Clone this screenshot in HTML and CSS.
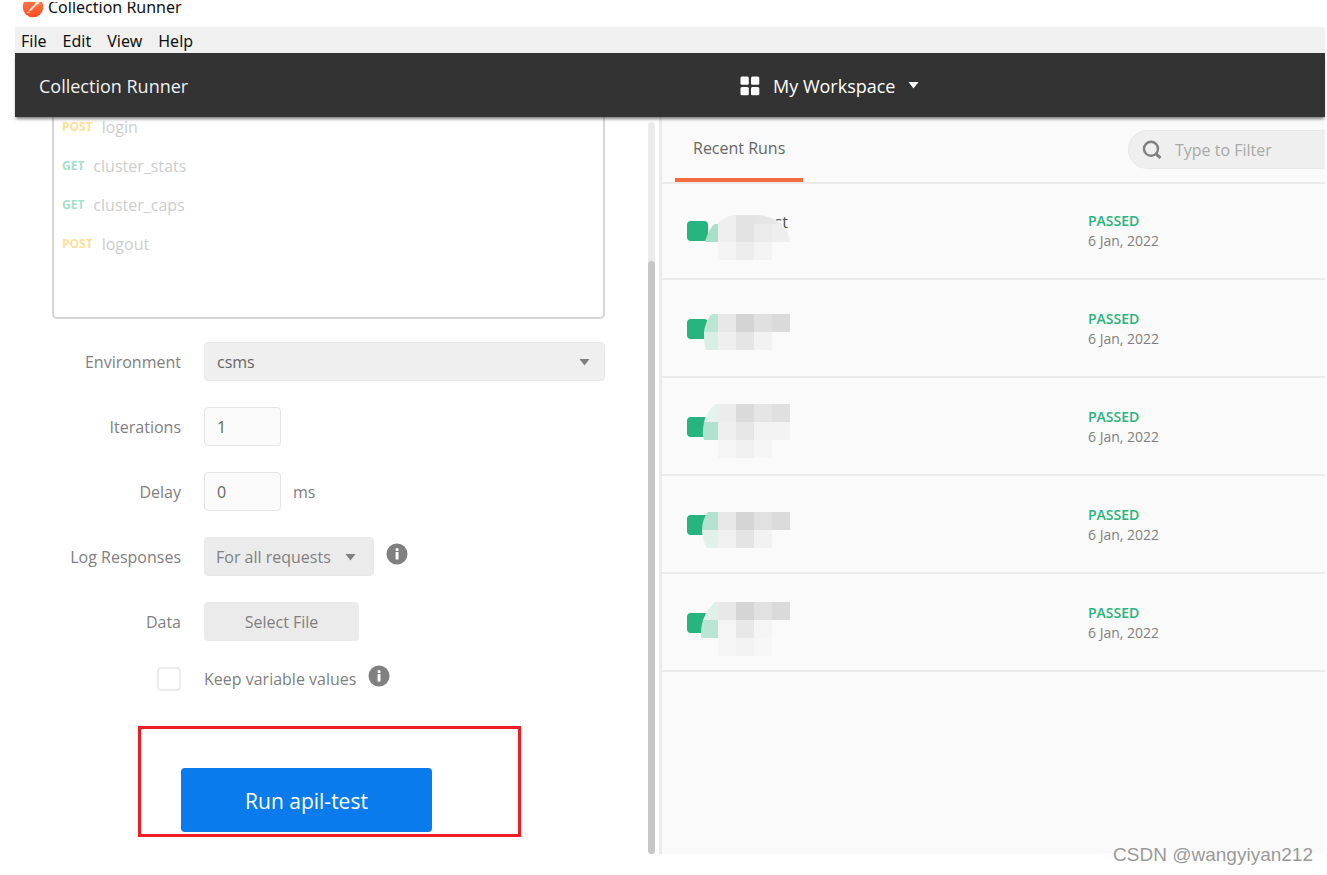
FILE: index.html
```html
<!DOCTYPE html>
<html lang="en">
<head>
<meta charset="utf-8">
<title>Collection Runner</title>
<link rel="stylesheet" href="styles.css">
</head>
<body>
<div class="window">
  <div class="titlebar">
    <svg class="logo" width="22" height="22" viewBox="0 0 22 22" aria-hidden="true">
      <defs><linearGradient id="flame" x1="0" y1="0" x2="0" y2="1"><stop offset="0" stop-color="#ff8450"/><stop offset="1" stop-color="#fb4a22"/></linearGradient></defs>
      <circle cx="11" cy="11" r="10.3" fill="url(#flame)"/>
      <circle cx="15.4" cy="6.400" r="2" fill="#ffe3d8"/>
      <path d="M13.800 7.200 8 13l-1.400 2.600 3-1.400 5.400-5.600z" fill="#ffe9e0"/>
      <path d="M7.600 14 5 16.600h3" fill="none" stroke="#ffb99f" stroke-width="0.800"/>
    </svg>
    <span>Collection Runner</span>
  </div>
  <nav class="menubar" aria-label="Menu">
    <button type="button">File</button>
    <button type="button">Edit</button>
    <button type="button">View</button>
    <button type="button">Help</button>
  </nav>
  <header class="header">
    <h1>Collection Runner</h1>
    <button type="button" class="workspace">
      <svg width="20" height="20" viewBox="0 0 20 20" fill="#fff" aria-hidden="true"><rect x="0.500" y="0.500" width="8.300" height="8.300" rx="1.500"/><rect x="11" y="0.500" width="8.300" height="8.300" rx="1.500"/><rect x="0.500" y="11" width="8.300" height="8.300" rx="1.500"/><rect x="11" y="11" width="8.300" height="8.300" rx="1.500"/></svg>
      <span>My Workspace</span>
      <svg width="11" height="7" viewBox="0 0 11 7" fill="#fff" aria-hidden="true"><path d="M0.500 0h10L5.500 6.500z"/></svg>
    </button>
  </header>

  <main class="content">
    <section class="config">
      <form class="form">
        <ul class="requests">
          <li><span class="method post">POST</span>login</li>
          <li><span class="method get">GET</span>cluster_stats</li>
          <li><span class="method get">GET</span>cluster_caps</li>
          <li><span class="method post">POST</span>logout</li>
        </ul>
        <div class="fields">
          <label for="env">Environment</label>
          <div class="control select-wrap wide">
            <select id="env"><option>csms</option></select>
            <svg width="11" height="7" viewBox="0 0 11 7" aria-hidden="true"><path d="M0.500 0h10L5.500 6.500z"/></svg>
          </div>
          <label for="iter">Iterations</label>
          <div class="control"><input id="iter" class="num" type="text" value="1"></div>
          <label for="delay">Delay</label>
          <div class="control"><input id="delay" class="num" type="text" value="0"><span>ms</span></div>
          <label for="log">Log Responses</label>
          <div class="control">
            <div class="select-wrap log">
              <select id="log"><option>For all requests</option></select>
              <svg width="11" height="7" viewBox="0 0 11 7" aria-hidden="true"><path d="M0.500 0h10L5.500 6.500z"/></svg>
            </div>
            <svg class="info" width="22" height="22" viewBox="0 0 22 22" aria-hidden="true"><circle cx="11" cy="11" r="10.500" fill="#808080"/><rect x="9.600" y="5.300" width="2.900" height="2.600" rx="0.600" fill="#fff"/><rect x="9.600" y="9" width="2.900" height="7.500" rx="0.600" fill="#fff"/></svg>
          </div>
          <label for="file">Data</label>
          <div class="control"><button id="file" type="button" class="file">Select File</button></div>
          <input id="keep" class="check" type="checkbox">
          <div class="control short">
            <label for="keep">Keep variable values</label>
            <svg class="info" width="22" height="22" viewBox="0 0 22 22" aria-hidden="true"><circle cx="11" cy="11" r="10.500" fill="#808080"/><rect x="9.600" y="5.300" width="2.900" height="2.600" rx="0.600" fill="#fff"/><rect x="9.600" y="9" width="2.900" height="7.500" rx="0.600" fill="#fff"/></svg>
          </div>
        </div>
        <div class="submit">
          <button type="button" class="run">Run apil-test</button>
          <div class="highlight"></div>
        </div>
      </form>
      <div class="scrollbar"><div class="thumb"></div></div>
    </section>

    <section class="runs">
      <div class="toolbar">
        <button type="button" class="tab">Recent Runs</button>
        <div class="search">
          <svg width="20" height="20" viewBox="0 0 20 20" fill="none" stroke="#808080" aria-hidden="true"><circle cx="9" cy="8.800" r="7" stroke-width="2.400"/><path d="M13.800 13.600 18.500 18" stroke-width="3"/></svg>
          <input type="text" placeholder="Type to Filter" aria-label="Type to Filter">
        </div>
      </div>
      <ul class="list">
        <li>
          <div class="run-name"><i class="swatch"></i><span>apil-test</span>
            <svg class="mosaic" viewBox="0 0 100 96" aria-hidden="true">
              <path d="M18 42V30h18v10z" fill="#fafafa"/>
              <path d="M5 60C7 52 11 44 15 42h3v18z" fill="#a9dfca"/>
              <path d="M18 41C25 35 30 33 38 33v27H18z" fill="#efefef"/><path d="M36 33h18v27H36z" fill="#e3e3e3"/><path d="M54 33c10 0 14 2 18 3v24H54z" fill="#ebebeb"/><path d="M72 36c10 4 17 13 18 24H72z" fill="#eee"/>
              <path d="M54 33c10 0 18 3 25 9H54z" fill="#e5e5e5"/>
              <path d="M18 60h18v18H18z" fill="#f4f4f4"/><path d="M36 60h18v18H36z" fill="#ededed"/><path d="M54 60h18v18H54z" fill="#f4f4f4"/>
            </svg></div>
          <div class="result"><strong>PASSED</strong><span>6 Jan, 2022</span></div>
        </li>
        <li>
          <div class="run-name"><i class="swatch"></i>
            <svg class="mosaic" viewBox="0 0 100 96" aria-hidden="true">
              <path d="M4 52C5 44 8 38 12 34h6v18z" fill="#bbe5d5"/><path d="M4 52h14v18H6C4 64 4 58 4 52z" fill="#d9efe6"/>
              <path d="M18 34h18v18H18z" fill="#e8e8e8"/><path d="M36 34h18v18H36z" fill="#d4d4d4"/><path d="M54 34h18v18H54z" fill="#e0e0e0"/><path d="M72 34h18v18H72z" fill="#dadada"/>
              <path d="M18 52h18v18H18z" fill="#efefef"/><path d="M36 52h18v18H36z" fill="#e5e5e5"/><path d="M54 52h18v18H54z" fill="#f2f2f2"/>
            </svg></div>
          <div class="result"><strong>PASSED</strong><span>6 Jan, 2022</span></div>
        </li>
        <li>
          <div class="run-name"><i class="swatch"></i>
            <svg class="mosaic" viewBox="0 0 100 96" aria-hidden="true">
              <path d="M4 44C6 36 11 29 16 26h2v18z" fill="#e3f3ed"/><path d="M4 44h14v18H4C2 56 3 50 4 44z" fill="#b1e1cf"/>
              <path d="M18 26h18v18H18z" fill="#ececec"/><path d="M36 26h18v18H36z" fill="#dadada"/><path d="M54 26h18v18H54z" fill="#e5e5e5"/><path d="M72 26h18v18H72z" fill="#e0e0e0"/>
              <path d="M18 44h18v18H18z" fill="#efefef"/><path d="M36 44h18v18H36z" fill="#e6e6e6"/><path d="M54 44h36v18H54z" fill="#f3f3f3"/>
              <path d="M18 62h18v18H18z" fill="#f5f5f5"/><path d="M36 62h18v18H36z" fill="#f0f0f0"/><path d="M54 62h18v18H54z" fill="#f6f6f6"/>
            </svg></div>
          <div class="result"><strong>PASSED</strong><span>6 Jan, 2022</span></div>
        </li>
        <li>
          <div class="run-name"><i class="swatch"></i>
            <svg class="mosaic" viewBox="0 0 100 96" aria-hidden="true">
              <path d="M2 54C2 47 4 41 8 36h10v18z" fill="#b4e2d0"/><path d="M2 54h16v18H7C4 67 2 61 2 54z" fill="#e1f2eb"/>
              <path d="M18 36h18v18H18z" fill="#e8e8e8"/><path d="M36 36h18v18H36z" fill="#d5d5d5"/><path d="M54 36h18v18H54z" fill="#e1e1e1"/><path d="M72 36h18v18H72z" fill="#dbdbdb"/>
              <path d="M18 54h18v18H18z" fill="#f0f0f0"/><path d="M36 54h18v18H36z" fill="#e4e4e4"/><path d="M54 54h18v18H54z" fill="#f2f2f2"/>
            </svg></div>
          <div class="result"><strong>PASSED</strong><span>6 Jan, 2022</span></div>
        </li>
        <li>
          <div class="run-name"><i class="swatch"></i>
            <svg class="mosaic" viewBox="0 0 100 96" aria-hidden="true">
              <path d="M3 46C6 38 10 32 15 28h3v18z" fill="#e0f1ea"/><path d="M3 46h15v18H1C1 58 1 52 3 46z" fill="#bae5d5"/>
              <path d="M18 28h18v18H18z" fill="#e8e8e8"/><path d="M36 28h18v18H36z" fill="#d5d5d5"/><path d="M54 28h18v18H54z" fill="#e1e1e1"/><path d="M72 28h18v18H72z" fill="#dadada"/>
              <path d="M18 46h18v18H18z" fill="#f5f5f5"/><path d="M36 46h18v18H36z" fill="#e8e8e8"/><path d="M54 46h18v18H54z" fill="#f5f5f5"/>
              <path d="M18 64h18v18H18z" fill="#f5f5f5"/><path d="M36 64h18v18H36z" fill="#f3f3f3"/><path d="M54 64h18v18H54z" fill="#f7f7f7"/>
            </svg></div>
          <div class="result"><strong>PASSED</strong><span>6 Jan, 2022</span></div>
        </li>
      </ul>
    </section>
  </main>
  <div class="watermark">CSDN @wangyiyan212</div>
</div>
</body>
</html>
```
FILE: styles.css
```css
* { box-sizing: border-box; }
body {
  margin: 0;
  background: #fff;
  color: #808080;
  font-family: "Open Sans", "Noto Sans", sans-serif;
  font-size: 16px;
  line-height: 20px;
}
button, input, select {
  margin: 0;
  padding: 0;
  border: 0;
  background: none;
  color: inherit;
  font: inherit;
}
ul { margin: 0; padding: 0; list-style: none; }
.window {
  position: relative;
  display: flex;
  flex-direction: column;
  min-height: 100vh;
  padding: 2px 2px 21px 15px;
}
.titlebar {
  display: flex;
  align-items: flex-end;
  gap: 4px;
  height: 25px;
  padding: 0 0 9px 7px;
  overflow: hidden;
  color: #111;
  font-family: "Noto Sans", sans-serif;
  line-height: 22px;
}
.logo { flex: none; }
.menubar {
  display: flex;
  gap: 16px;
  height: 26px;
  padding: 2px 0 0 6px;
  background: #f0f0f0;
  color: #111;
  font-family: "Noto Sans", sans-serif;
}
.header {
  position: relative;
  z-index: 1;
  display: grid;
  grid-template-columns: 725fr 585fr;
  align-items: center;
  height: 64px;
  padding-top: 1px;
  background: #333;
  box-shadow: 0 3px 3px -1px rgba(0, 0, 0, 0.5);
  color: #f0f0f0;
  font-size: 18px;
}
.header h1 { margin: 0; padding-left: 24px; font-size: 18px; font-weight: 400; }
.workspace { display: flex; align-items: center; justify-self: start; gap: 13px; color: #fff; }

.content { display: grid; flex: 1; grid-template-columns: 644fr 666fr; }
.config { display: flex; gap: 43px; padding: 0 4px 0 37px; }
.form { flex: 1; }
.requests {
  margin-top: -10px;
  padding: 0 8px 54px;
  border: 2px solid #d6d6d6;
  border-top: 0;
  border-radius: 0 0 5px 5px;
  color: #cdcdcd;
}
.requests li { display: flex; align-items: center; gap: 9px; height: 39px; }
.method { font-size: 12px; font-weight: 700; }
.post { color: #ffdf99; }
.get { color: #a8e0ca; }
.fields {
  display: grid;
  grid-template-columns: 129px 1fr;
  gap: 26px 23px;
  align-items: center;
  margin-top: 23px;
}
.fields > label { text-align: right; }
.control { display: flex; align-items: center; gap: 12px; height: 39px; }
.control.short { height: 22px; }
.select-wrap { position: relative; }
.select-wrap select {
  width: 100%;
  height: 39px;
  padding: 0 12px;
  border: 1px solid #e8e8e8;
  border-radius: 4px;
  background: #efefef;
  appearance: none;
}
.select-wrap svg { position: absolute; top: 17px; right: 15px; fill: #808080; }
.wide select { color: #666; }
.log { width: 170px; }
.log select { padding: 0 11px; background: #ebebeb; }
.log svg { right: 18px; }
.info { margin-bottom: 6px; }
.num {
  width: 77px;
  height: 39px;
  padding: 0 12px;
  border: 1px solid #e5e5e5;
  border-radius: 4px;
  background: #fafafa;
  color: #666;
}
.file { width: 155px; height: 39px; border-radius: 4px; background: #ebebeb; }
.check {
  justify-self: end;
  width: 24px;
  height: 24px;
  border: 2px solid #ebebeb;
  border-radius: 4px;
  appearance: none;
}
.submit { position: relative; margin: 77px 0 0 129px; }
.run {
  width: 251px;
  height: 64px;
  padding-top: 2px;
  border-radius: 4px;
  background: #097bed;
  color: #fff;
  font-size: 21px;
}
.highlight {
  position: absolute;
  top: -42px;
  left: -43px;
  width: 383px;
  height: 111px;
  border: 3px solid #ee1c25;
  pointer-events: none;
}
.scrollbar {
  display: flex;
  flex-direction: column;
  justify-content: flex-end;
  width: 7px;
  margin-top: 5px;
  border-radius: 4px;
  background: #ebebeb;
}
.thumb { height: 81%; border-radius: 4px; background: #c6c6c6; }

.runs { border-left: 3px solid #ebebeb; background: #fafafa; }
.toolbar {
  display: flex;
  justify-content: space-between;
  height: 67px;
  padding-left: 13px;
  border-bottom: 2px solid #ebebeb;
}
.tab {
  padding: 0 18px;
  border-bottom: 4px solid #f26b3a;
  color: #666;
}
.search {
  display: flex;
  align-items: center;
  gap: 13px;
  width: 197px;
  height: 39px;
  margin-top: 13px;
  padding-left: 13px;
  border: 1px solid #e8e8e8;
  border-right: 0;
  border-radius: 20px 0 0 20px;
  background: #efefef;
}
.search svg { flex: none; }
.search input { min-width: 0; }
.search input::placeholder { color: #a9a9a9; opacity: 1; }
.list { margin-top: -2px; }
.list li {
  display: grid;
  grid-template-columns: 426fr 237fr;
  height: 98px;
  border-bottom: 2px solid #ebebeb;
}
.run-name { position: relative; padding: 30px 0 0 66px; color: #505050; }
.swatch {
  position: absolute;
  top: 39px;
  left: 25px;
  width: 21px;
  height: 20px;
  border-radius: 4px;
  background: #26b47f;
}
.mosaic { position: absolute; top: 0; left: 38px; width: 100px; height: 96px; }
.result { display: flex; flex-direction: column; padding-top: 29px; font-size: 14px; }
.result strong { color: #26b47f; font-weight: 600; }
.watermark {
  position: absolute;
  right: 14px;
  bottom: 8px;
  color: #999;
  font-family: "Liberation Sans", sans-serif;
  font-size: 19px;
  line-height: 24px;
  text-shadow: 1px 1px 0 #fff;
}
```
